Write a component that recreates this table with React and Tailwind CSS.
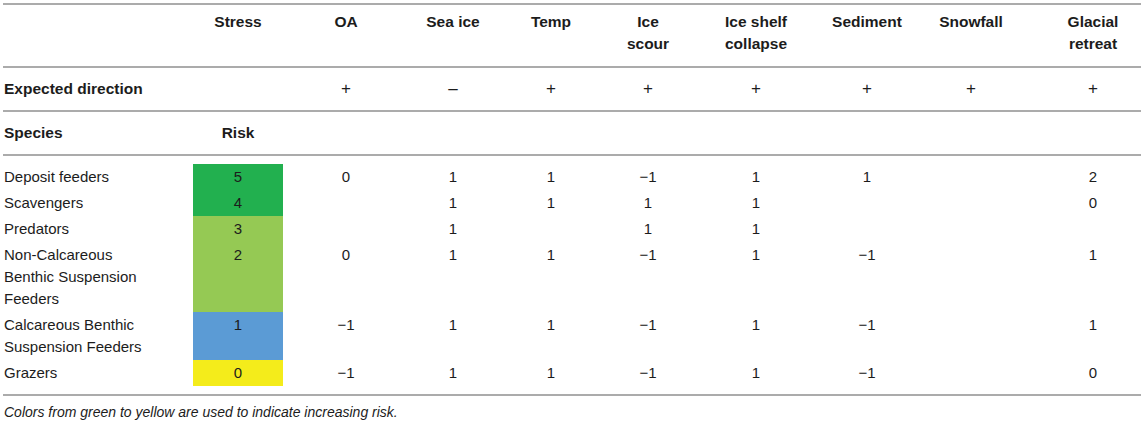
import React from "react";

const cols =
  "grid grid-cols-[190px_90px_126px_88px_108px_86px_130px_92px_116px_112px]";

const headers = [
  "OA",
  "Sea ice",
  "Temp",
  ["Ice", "scour"],
  ["Ice shelf", "collapse"],
  "Sediment",
  "Snowfall",
  ["Glacial", "retreat"],
];

const directions = ["+", "–", "+", "+", "+", "+", "+", "+"];

const M = "\u22121";

const rows = [
  { name: ["Deposit feeders"], risk: 5, bg: "bg-[#22b04f]", vals: ["0", "1", "1", M, "1", "1", "", "2"] },
  { name: ["Scavengers"], risk: 4, bg: "bg-[#22b04f]", vals: ["", "1", "1", "1", "1", "", "", "0"] },
  { name: ["Predators"], risk: 3, bg: "bg-[#95c954]", vals: ["", "1", "", "1", "1", "", "", ""] },
  {
    name: ["Non-Calcareous", "Benthic Suspension", "Feeders"],
    risk: 2,
    bg: "bg-[#95c954]",
    vals: ["0", "1", "1", M, "1", M, "", "1"],
  },
  {
    name: ["Calcareous Benthic", "Suspension Feeders"],
    risk: 1,
    bg: "bg-[#5b9bd5]",
    vals: [M, "1", "1", M, "1", M, "", "1"],
  },
  { name: ["Grazers"], risk: 0, bg: "bg-[#f4ec1b]", vals: [M, "1", "1", M, "1", M, "", "0"] },
];

const Lines = ({ parts }) =>
  (Array.isArray(parts) ? parts : [parts]).map((p, i) => <div key={i}>{p}</div>);

export default function App() {
  return (
    <div
      className="w-[1145px] h-[423px] bg-white text-[#1c1c1c] text-[15px] overflow-hidden"
      style={{ fontFamily: '"Liberation Sans", Arial, sans-serif' }}
    >
      <div className="ml-[3px] w-[1138px] mt-[3px] border-t-2 border-[#ababab]">
        {/* header */}
        <div className={`${cols} box-border h-[63px] border-b-2 border-[#ababab] pt-[6px] font-bold text-[15.5px] leading-[22px]`}>
          <div />
          <div className="text-center">Stress</div>
          {headers.map((h, i) => (
            <div key={i} className={`text-center ${i === 7 ? "pl-[16px]" : ""}`}>
              <Lines parts={h} />
            </div>
          ))}
        </div>

        {/* expected direction */}
        <div className={`${cols} box-border h-[44px] items-center border-b-2 border-[#ababab] leading-[22px]`}>
          <div className="pl-[1px] font-bold text-[15.5px]">Expected direction</div>
          <div />
          {directions.map((d, i) => (
            <div key={i} className={`text-center text-[17px] ${i === 7 ? "pl-[16px]" : ""}`}>
              {d}
            </div>
          ))}
        </div>

        {/* species */}
        <div className={`${cols} box-border h-[44px] items-center border-b-2 border-[#ababab] font-bold text-[15.5px] leading-[22px]`}>
          <div className="pl-[1px]">Species</div>
          <div className="text-center">Risk</div>
        </div>

        {/* body */}
        <div className="pt-[8px] pb-[8px] border-b-2 border-[#ababab] leading-[22px]">
          {rows.map((r, ri) => (
            <div key={ri} className={cols}>
              <div className="pl-[1px] py-[2px]">
                <Lines parts={r.name} />
              </div>
              <div className={`${r.bg} py-[2px] text-center`}>{r.risk}</div>
              {r.vals.map((v, i) => (
                <div key={i} className={`py-[2px] text-center ${i === 7 ? "pl-[16px]" : ""}`}>
                  {v}
                </div>
              ))}
            </div>
          ))}
        </div>

        <div className="pt-[6px] pl-[1px] italic text-[14px] leading-[20px]">
          Colors from green to yellow are used to indicate increasing risk.
        </div>
      </div>
    </div>
  );
}
